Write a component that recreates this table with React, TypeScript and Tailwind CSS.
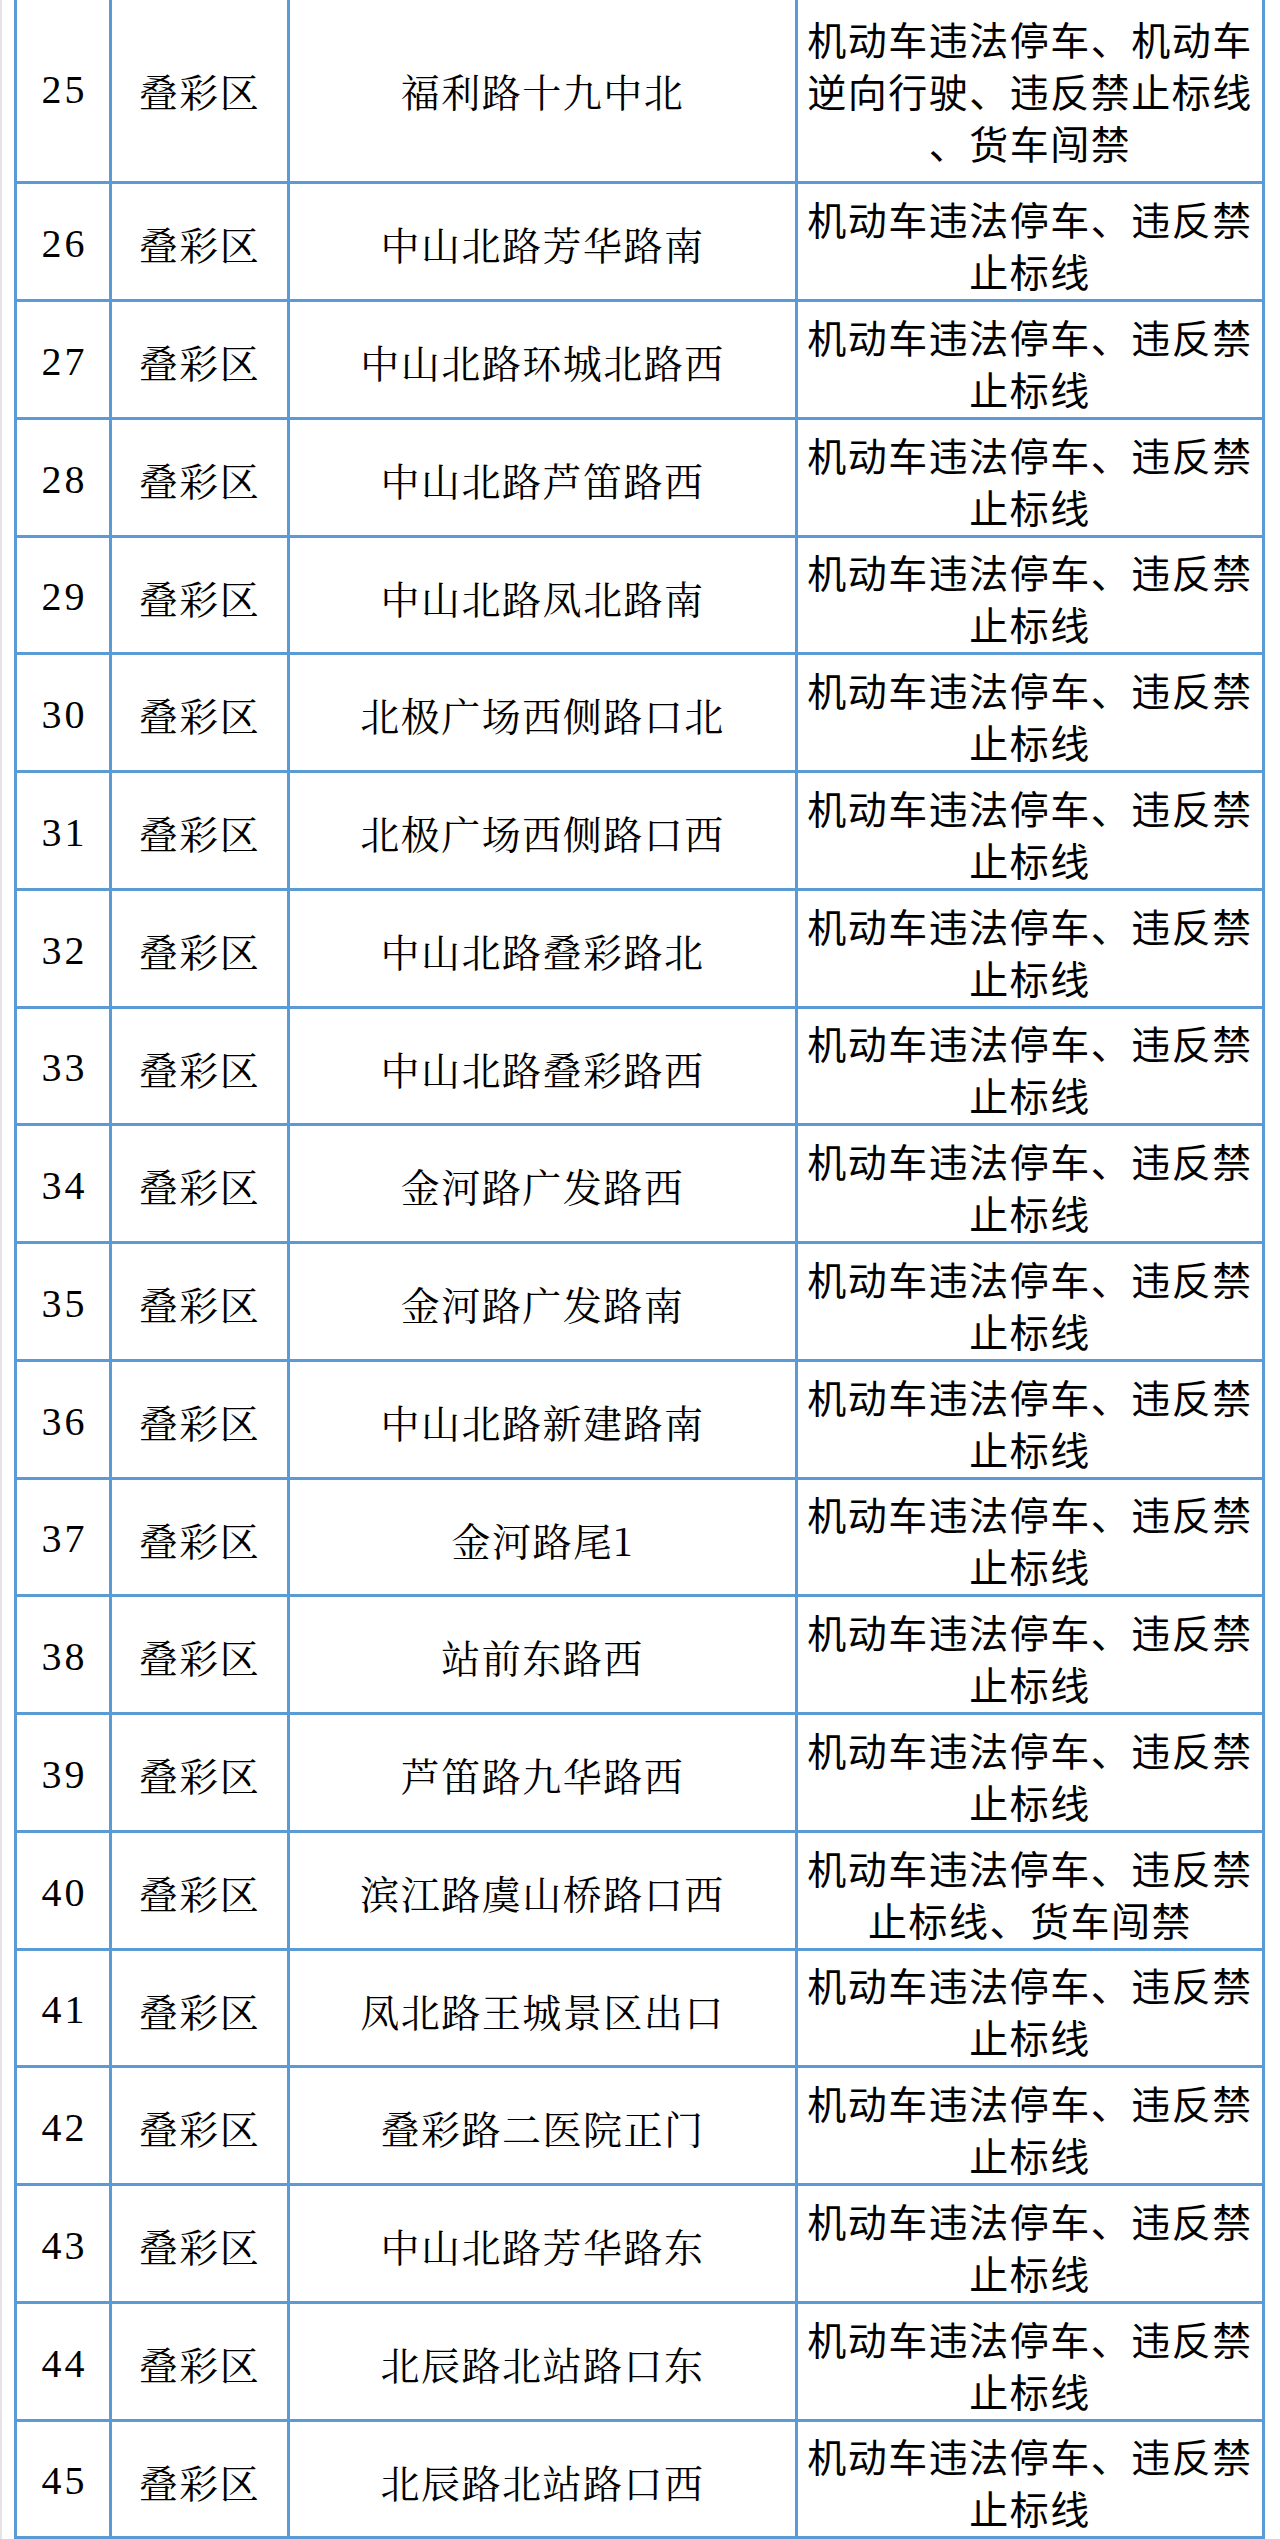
import React from "react";

type Row = {
  no: number;
  place: string;
  lines?: string[];
};

const DEFAULT_LINES = ["机动车违法停车、违反禁", "止标线"];

const rows: Row[] = [
  {
    no: 25,
    place: "福利路十九中北",
    lines: ["机动车违法停车、机动车", "逆向行驶、违反禁止标线", "、货车闯禁"],
  },
  { no: 26, place: "中山北路芳华路南" },
  { no: 27, place: "中山北路环城北路西" },
  { no: 28, place: "中山北路芦笛路西" },
  { no: 29, place: "中山北路凤北路南" },
  { no: 30, place: "北极广场西侧路口北" },
  { no: 31, place: "北极广场西侧路口西" },
  { no: 32, place: "中山北路叠彩路北" },
  { no: 33, place: "中山北路叠彩路西" },
  { no: 34, place: "金河路广发路西" },
  { no: 35, place: "金河路广发路南" },
  { no: 36, place: "中山北路新建路南" },
  { no: 37, place: "金河路尾1" },
  { no: 38, place: "站前东路西" },
  { no: 39, place: "芦笛路九华路西" },
  {
    no: 40,
    place: "滨江路虞山桥路口西",
    lines: ["机动车违法停车、违反禁", "止标线、货车闯禁"],
  },
  { no: 41, place: "凤北路王城景区出口" },
  { no: 42, place: "叠彩路二医院正门" },
  { no: 43, place: "中山北路芳华路东" },
  { no: 44, place: "北辰路北站路口东" },
  { no: 45, place: "北辰路北站路口西" },
];

const cjk =
  "font-['Noto_Serif_CJK_SC','Noto_Sans_CJK_SC',serif] text-[39px] tracking-[1.5px] text-black";
const cjkSans =
  "font-['Noto_Sans_CJK_SC',sans-serif] text-[39px] tracking-[1.5px] text-black";

function TableRow({ row, index }: { row: Row; index: number }) {
  //first row is cut by the top of the page, the rest share 117.75px
  const height =
    index === 0 ? "h-[189px]" : index % 4 === 0 ? "h-[117px]" : "h-[118px]";
  const lines = row.lines ?? DEFAULT_LINES;

  return (
    <div className={`flex ${height} border-b-[3px] border-[#5b9bd5]`}>
      <div className="flex w-[95px] items-center justify-center border-r-[3px] border-[#5b9bd5] pl-[3px] pt-[4px] font-['Liberation_Serif','Times_New_Roman',serif] text-[40px] tracking-[3px] text-black">
        {row.no}
      </div>
      <div
        className={`flex w-[178px] items-center justify-center border-r-[3px] border-[#5b9bd5] pt-[4px] ${cjk}`}
      >
        叠彩区
      </div>
      <div
        className={`flex w-[508px] items-center justify-center border-r-[3px] border-[#5b9bd5] pt-[4px] ${cjk}`}
      >
        {row.place}
      </div>
      <div
        className={`flex w-[467px] flex-col items-center justify-center border-r-[3px] border-[#5b9bd5] pt-[4px] leading-[52px] ${cjkSans}`}
      >
        {lines.map((line, i) => (
          <span key={i} className="whitespace-nowrap">
            {line}
          </span>
        ))}
      </div>
    </div>
  );
}

export default function App() {
  return (
    <div className="h-[2539px] w-[1280px] overflow-hidden border-l-[2px] border-[#e4e4e4] bg-white">
      <div className="ml-[12px] mt-[-5px] w-[1251px] border-l-[3px] border-[#5b9bd5]">
        {rows.map((row, index) => (
          <TableRow key={row.no} row={row} index={index} />
        ))}
      </div>
    </div>
  );
}
